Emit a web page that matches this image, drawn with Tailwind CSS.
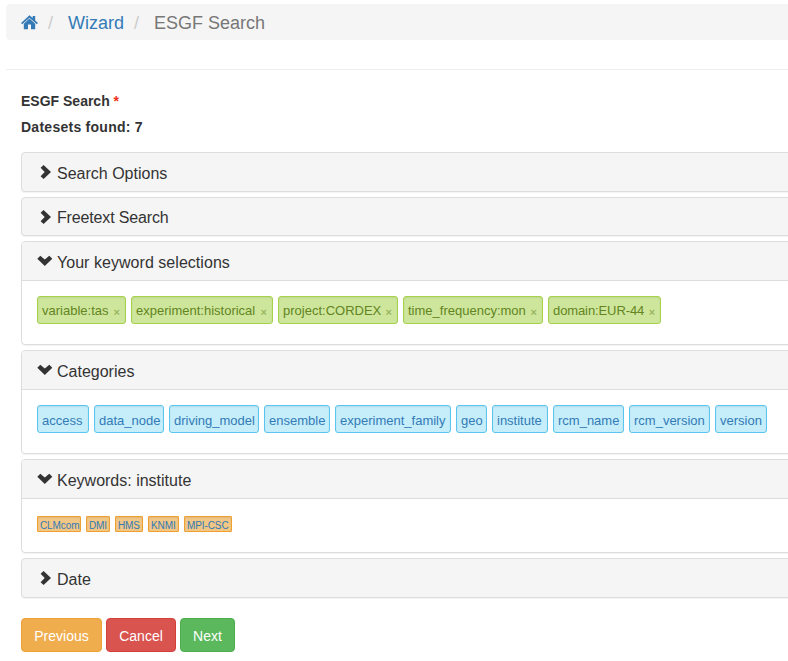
<!DOCTYPE html>
<html lang="en">
<head>
<meta charset="utf-8">
<title>ESGF Search</title>
<script src="https://cdn.jsdelivr.net/npm/@tailwindcss/browser@4"></script>
</head>
<body class="bg-white text-[#333] font-['Liberation_Sans',Arial,sans-serif] text-sm w-[788px] h-[661px] overflow-hidden">
<svg class="hidden">
  <symbol id="right" viewBox="0 0 16 16"><path d="M3.6 3.8 6.6 .9 14 8 6.6 15.1 3.6 12.2 7.7 8Z"/></symbol>
  <symbol id="down" viewBox="0 0 16 16"><path d="M.3 5.7 3.3 2.7 7.8 6.6 12.3 2.7 15.3 5.7 7.8 12.9Z"/></symbol>
</svg>
<nav class="mt-1 ml-1.5 h-9 pl-[15px] pt-px bg-[#f5f5f5] rounded-l flex items-center text-lg whitespace-nowrap">
  <a class="text-[#337ab7] w-[27px]"><svg class="w-[17px] h-[15px]" viewBox="0 0 17 15" fill="currentColor"><path d="M8.5.2 11.7 3.1V1H14.2V5.4L17 8.1 15.8 9.3 8.5 2.7 1.2 9.3 0 8.1Z"/><path d="M8.5 3.6 14.2 8.8V14.3H10V9.6H7V14.3H2.8V8.8Z"/></svg></a>
  <span class="text-[#ccc] w-5">/</span>
  <a class="text-[#337ab7] w-[66px]">Wizard</a>
  <span class="text-[#ccc] w-5">/</span>
  <span class="text-[#777]">ESGF Search</span>
</nav>
<hr class="mt-[29px] ml-1.5 border-t border-[#eee]">
<main class="pl-[21px] pt-[21px]">
  <div class="font-bold leading-5">ESGF Search <span class="text-[#f03020]">*</span></div>
  <div class="font-bold leading-5 mt-1.5 tracking-[0.26px]">Datesets found: 7</div>
  <div class="mt-[15px] w-[800px] flex flex-col gap-[5px] text-base">
    <section class="h-10 border border-[#ddd] rounded bg-[#f5f5f5] shadow-[0_1px_1px_rgba(0,0,0,0.05)] flex items-center pl-[15px] pt-1"><svg class="w-4 h-4 mr-1 -mt-1 fill-[#333]"><use href="#right"/></svg>Search Options</section>
    <section class="h-[39px] border border-[#ddd] rounded bg-[#f5f5f5] shadow-[0_1px_1px_rgba(0,0,0,0.05)] flex items-center pl-[15px] pt-[3px] tracking-[-0.15px]"><svg class="w-4 h-4 mr-1 -mt-[3px] fill-[#333]"><use href="#right"/></svg>Freetext Search</section>
    <section class="h-[104px] border border-[#ddd] rounded shadow-[0_1px_1px_rgba(0,0,0,0.05)]">
      <h4 class="h-[39px] bg-[#f5f5f5] border-b border-[#ddd] rounded-t-[3px] flex items-center pl-[15px] pt-[3px] tracking-[0.04px]"><svg class="w-4 h-4 mr-1 -mt-1 fill-[#333]"><use href="#down"/></svg>Your keyword selections</h4>
      <div class="pl-[15px] pt-[15px] flex gap-[5px] text-[13px] leading-[28px] text-[#638421] whitespace-nowrap *:h-7 *:flex *:items-center *:justify-between *:rounded-[3px] *:border *:border-[#a5d24a] *:bg-[#cde69c] *:pl-1 *:pr-[5px] *:pt-px *:shadow-[inset_0_1px_2px_rgba(0,0,0,0.07)]">
        <span class="w-[89px]">variable:tas<b class="text-[11px] text-[#638421]/50 pt-0.5">×</b></span>
        <span class="w-[142px]">experiment:historical<b class="text-[11px] text-[#638421]/50 pt-0.5">×</b></span>
        <span class="w-[120px]">project:CORDEX<b class="text-[11px] text-[#638421]/50 pt-0.5">×</b></span>
        <span class="w-[140px]">time_frequency:mon<b class="text-[11px] text-[#638421]/50 pt-0.5">×</b></span>
        <span class="w-[113px] tracking-[-0.1px]">domain:EUR-44<b class="text-[11px] text-[#638421]/50 pt-0.5">×</b></span>
      </div>
    </section>
    <section class="h-[104px] border border-[#ddd] rounded shadow-[0_1px_1px_rgba(0,0,0,0.05)]">
      <h4 class="h-[39px] bg-[#f5f5f5] border-b border-[#ddd] rounded-t-[3px] flex items-center pl-[15px] pt-[3px]"><svg class="w-4 h-4 mr-1 -mt-1 fill-[#333]"><use href="#down"/></svg>Categories</h4>
      <div class="pl-[15px] pt-[15px] flex gap-[5px] text-[13px] text-[#337ab7] whitespace-nowrap *:h-7 *:flex *:items-center *:rounded-[3px] *:border *:border-[#5bc5f2] *:bg-[#c5eefa] *:pl-1 *:pt-[3px] *:shadow-[inset_0_1px_2px_rgba(0,0,0,0.07)]">
        <a class="w-[52px]">access</a><a class="w-[70px]">data_node</a><a class="w-[90px]">driving_model</a><a class="w-[66px]">ensemble</a><a class="w-[116px]">experiment_family</a><a class="w-[31px]">geo</a><a class="w-[56px]">institute</a><a class="w-[71px]">rcm_name</a><a class="w-[81px]">rcm_version</a><a class="w-[52px]">version</a>
      </div>
    </section>
    <section class="h-[94px] border border-[#ddd] rounded shadow-[0_1px_1px_rgba(0,0,0,0.05)]">
      <h4 class="h-[39px] bg-[#f5f5f5] border-b border-[#ddd] rounded-t-[3px] flex items-center pl-[15px] pt-[3px]"><svg class="w-4 h-4 mr-1 -mt-1 fill-[#333]"><use href="#down"/></svg>Keywords: institute</h4>
      <div class="pl-[15px] pt-[17px] flex gap-[5px] text-[10px] tracking-[-0.1px] text-[#337ab7] whitespace-nowrap *:h-4 *:flex *:items-center *:rounded-[1px] *:border *:border-[#f0a030] *:bg-[#f2c684] *:pl-0.5 *:pt-[3px] *:shadow-[inset_0_1px_2px_rgba(0,0,0,0.07)]">
        <a class="w-11">CLMcom</a><a class="w-6">DMI</a><a class="w-7">HMS</a><a class="w-[31px]">KNMI</a><a class="w-12">MPI-CSC</a>
      </div>
    </section>
    <section class="h-10 border border-[#ddd] rounded bg-[#f5f5f5] shadow-[0_1px_1px_rgba(0,0,0,0.05)] flex items-center pl-[15px] pt-1"><svg class="w-4 h-4 mr-1 -mt-1 fill-[#333]"><use href="#right"/></svg>Date</section>
  </div>
  <div class="mt-5 flex gap-1 text-white *:h-[34px] *:rounded *:border *:pt-0.5">
    <button class="w-[81px] bg-[#f0ad4e] border-[#eea236]">Previous</button>
    <button class="w-[70px] bg-[#d9534f] border-[#d43f3a]">Cancel</button>
    <button class="w-[55px] bg-[#5cb85c] border-[#4cae4c]">Next</button>
  </div>
</main>
</body>
</html>
